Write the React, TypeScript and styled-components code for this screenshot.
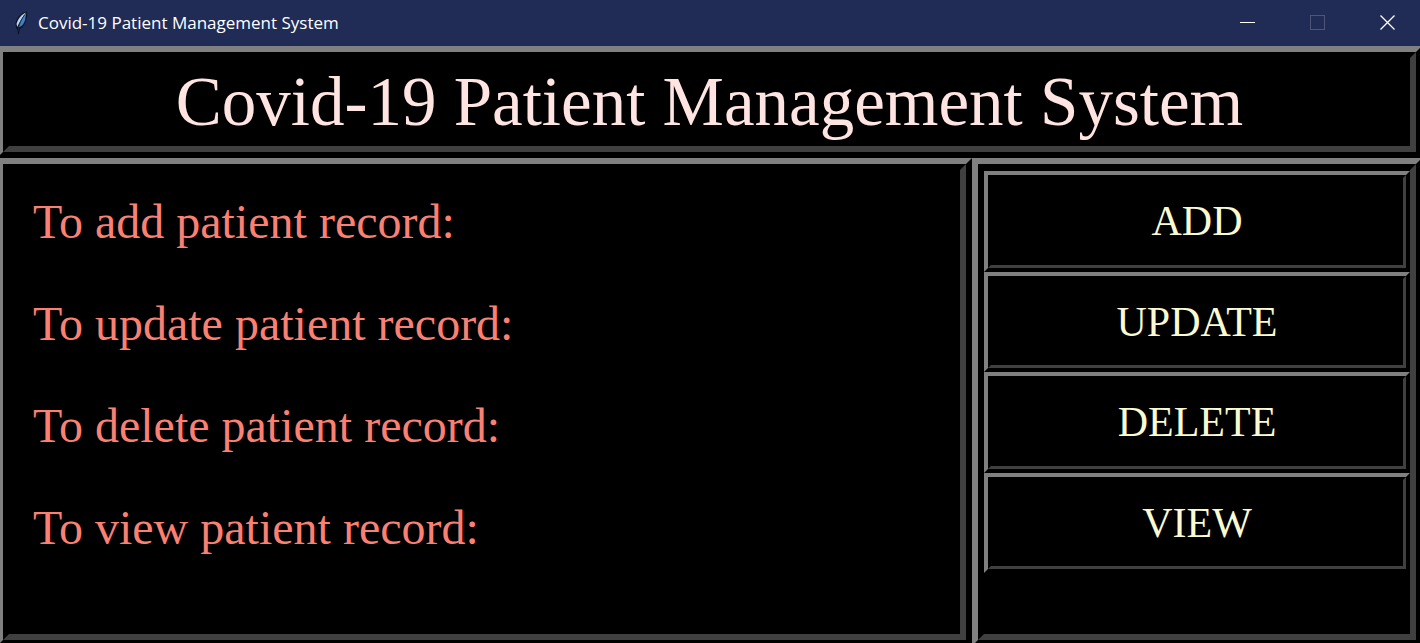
import React from "react";
import styled, { createGlobalStyle } from "styled-components";

const GlobalStyle = createGlobalStyle`
  * { box-sizing: border-box; }
  body { margin: 0; background: #000; overflow: hidden; }
`;

const Window = styled.div`
  display: flex;
  flex-direction: column;
  height: 100vh;
  overflow: hidden;
  background: #000;
`;

const TitleBar = styled.header`
  display: flex;
  align-items: center;
  height: 46px;
  flex: none;
  padding-left: 14px;
  background: #202c56;
  color: #fff;
  font: 17px/24px "Open Sans", "Noto Sans", sans-serif;
`;

const WindowTitle = styled.span`
  flex: 1;
  margin-left: 10px;
`;

const WindowControls = styled.div`
  display: flex;
  align-self: flex-start;
  gap: 5px;
`;

const WindowButton = styled.button`
  display: grid;
  place-items: center;
  width: 65px;
  height: 45px;
  padding: 0;
  border: 0;
  background: none;
  color: #fff;
  &:disabled { color: #4d5678; }
`;

const Content = styled.main`
  flex: 1;
  display: flex;
  flex-direction: column;
  min-height: 0;
  margin: 0 -2px -3px -3px;
  font-family: Constantia, "Liberation Serif", serif;
`;

const Ridge = styled.section`
  display: flex;
  border: 6px solid;
  border-color: #808080 #000 #000 #808080;
`;

const RidgeInner = styled.div`
  flex: 1;
  min-width: 0;
  border: 6px solid;
  border-color: #000 #404040 #404040 #000;
`;

const Heading = styled.h1`
  margin: 0;
  height: 88px;
  color: #ffe4e1;
  font-size: 69px;
  font-weight: 400;
  line-height: 88px;
  text-align: center;
  white-space: nowrap;
`;

const Columns = styled.div`
  flex: 1;
  min-height: 0;
  display: grid;
  grid-template-columns: 975fr 450fr;
`;

const Prompts = styled.div`
  display: flex;
  flex-direction: column;
  padding: 1px 24px 0;
`;

const Prompt = styled.label`
  height: 102px;
  color: #fa8072;
  font-size: 48px;
  line-height: 102px;
  white-space: nowrap;
`;

const Actions = styled.div`
  display: grid;
  grid-template-rows: repeat(4, 1fr);
  height: 402px;
  margin-top: 1px;
`;

const ActionButton = styled.button`
  display: flex;
  padding: 0;
  border: 4px solid;
  border-color: #808080 #000 #000 #808080;
  background: #000;
  color: #fafad2;
  font: 42px/48px Constantia, "Liberation Serif", serif;
`;

const ActionFace = styled.span`
  flex: 1;
  align-self: stretch;
  display: grid;
  place-items: center;
  border: 3px solid;
  border-color: #000 #404040 #404040 #000;
`;

const actions = ["add", "update", "delete", "view"];

const Feather = () => (
  <svg width="14" height="24" viewBox="0 0 14 24" aria-hidden="true">
    <path d="M13 0.500C8 1 3 6 1.500 12L2 17l1.500 2L4 23.500l1-.5L5.800 18C9 16.500 11 13 12 9l1.300-4z" fill="#0b1226" />
    <path d="M12 1.500C8 3 4 7.500 2.500 13l.8 3C5 12 8 7 12 1.500z" fill="#b5d3ee" />
    <path d="M12.200 2C9 6 5.500 11 4.500 16.500c3.500-1 6-4.500 6.700-8z" fill="#4580c0" />
    <path d="M10.500 4C7.500 8 5 13 4 20" fill="none" stroke="#172747" strokeWidth=".8" />
  </svg>
);

export default function App() {
  return (
    <>
      <GlobalStyle />
      <Window>
        <TitleBar>
          <Feather />
          <WindowTitle>Covid-19 Patient Management System</WindowTitle>
          <WindowControls>
            <WindowButton aria-label="Minimize">
              <svg width="15" height="15" shapeRendering="crispEdges">
                <path d="M0 7.500H15" stroke="currentColor" />
              </svg>
            </WindowButton>
            <WindowButton aria-label="Maximize" disabled>
              <svg width="15" height="15" shapeRendering="crispEdges">
                <path d="M.5.5h14v14H.5z" fill="none" stroke="currentColor" />
              </svg>
            </WindowButton>
            <WindowButton aria-label="Close">
              <svg width="15" height="15">
                <path d="M.5.5l14 14M14.500.5l-14 14" stroke="currentColor" strokeWidth="1.300" />
              </svg>
            </WindowButton>
          </WindowControls>
        </TitleBar>
        <Content>
          <Ridge>
            <RidgeInner>
              <Heading>Covid-19 Patient Management System</Heading>
            </RidgeInner>
          </Ridge>
          <Columns>
            <Ridge>
              <RidgeInner>
                <Prompts>
                  {actions.map((name) => (
                    <Prompt key={name} htmlFor={name}>{`To ${name} patient record:`}</Prompt>
                  ))}
                </Prompts>
              </RidgeInner>
            </Ridge>
            <Ridge>
              <RidgeInner>
                <Actions>
                  {actions.map((name) => (
                    <ActionButton key={name} id={name} type="button">
                      <ActionFace>{name.toUpperCase()}</ActionFace>
                    </ActionButton>
                  ))}
                </Actions>
              </RidgeInner>
            </Ridge>
          </Columns>
        </Content>
      </Window>
    </>
  );
}
